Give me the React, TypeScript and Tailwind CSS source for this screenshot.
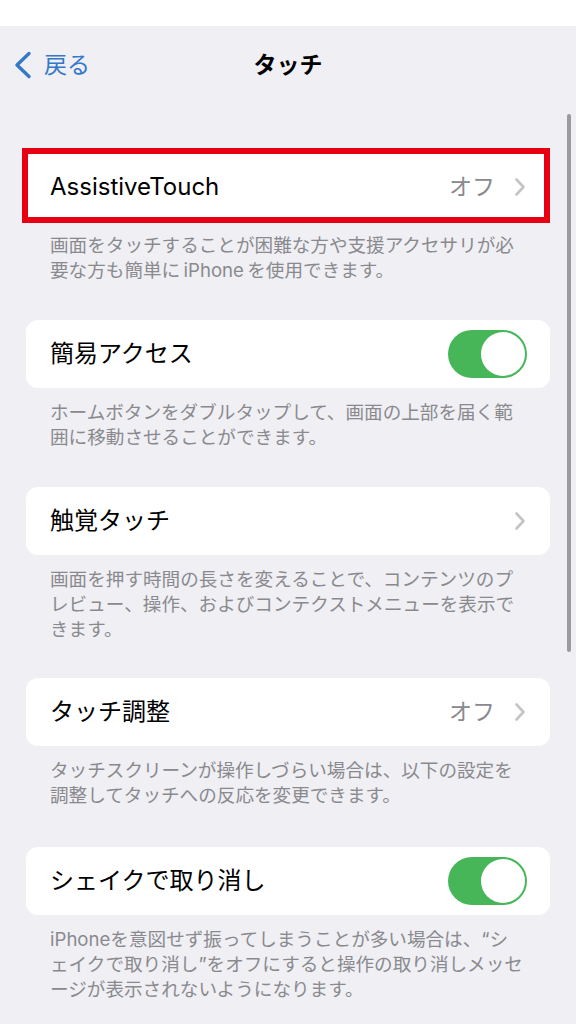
import React from "react";

const font = { fontFamily: 'Inter, "Noto Sans CJK JP", sans-serif' };

function Chevron() {
  return (
    <svg width="12" height="20" viewBox="0 0 12 20" className="shrink-0">
      <path d="M2.5 2.5 L9.5 10 L2.5 17.5" fill="none" stroke="#c4c4c8" strokeWidth="2.6" strokeLinecap="round" strokeLinejoin="round" />
    </svg>
  );
}

function Toggle() {
  return (
    <div className="relative w-[79px] h-[48px] rounded-full bg-[#46b658] shrink-0">
      <div className="absolute right-[2px] top-[2px] w-[44px] h-[44px] rounded-full bg-white" />
    </div>
  );
}

function Footer({ lines }: { lines: string[] }) {
  return (
    <div className="mt-[12px] px-[50px] text-[18.6px] leading-[25px] text-[#8a8a8e]">
      {lines.map((l, i) => (
        <div key={i} className="whitespace-nowrap">{l}</div>
      ))}
    </div>
  );
}

function Row({
  label,
  value,
  chevron,
  toggle,
}: {
  label: string;
  value?: string;
  chevron?: boolean;
  toggle?: boolean;
}) {
  return (
    <div
      className={`mx-[26px] h-[68px] rounded-[12px] bg-white flex items-center pl-[24px] ${toggle ? "pr-[23px]" : "pr-[24px]"}`}
    >
      <div className="flex-1 text-[24px] text-black whitespace-nowrap">{label}</div>
      {value && <div className="text-[23px] text-[#8a8a8e] mr-[19px]">{value}</div>}
      {chevron && <Chevron />}
      {toggle && <Toggle />}
    </div>
  );
}

export default function App() {
  return (
    <div className="relative w-[576px] h-[1024px] bg-[#efeff4] overflow-hidden" style={font} lang="ja">
      <div className="h-[26px] bg-white" />
      <div className="h-[78px] grid grid-cols-[1fr_auto_1fr] items-center">
        <div className="flex items-center pl-[14px]">
          <svg width="18" height="28" viewBox="0 0 18 28">
            <path d="M15 2.5 L3 14 L15 25.5" fill="none" stroke="#3478c8" strokeWidth="3.4" strokeLinecap="round" strokeLinejoin="round" />
          </svg>
          <span className="ml-[12px] text-[23px] text-[#3478c8]">戻る</span>
        </div>
        <div className="text-[23px] font-bold text-black">タッチ</div>
        <div />
      </div>

      <div className="mt-[49px]">
        <div className="relative">
          <Row label="AssistiveTouch" value="オフ" chevron />
          <div className="absolute left-[22px] right-[26px] top-[-5px] bottom-[-2px] border-[6px] border-[#e60012] pointer-events-none" />
        </div>
        <Footer
          lines={[
            "画面をタッチすることが困難な方や支援アクセサリが必",
            "要な方も簡単に\u2009iPhone\u2009を使用できます。",
          ]}
        />

        <div className="mt-[37px]">
          <Row label="簡易アクセス" toggle />
          <Footer
            lines={[
              "ホームボタンをダブルタップして、画面の上部を届く範",
              "囲に移動させることができます。",
            ]}
          />
        </div>

        <div className="mt-[37px]">
          <Row label="触覚タッチ" chevron />
          <Footer
            lines={[
              "画面を押す時間の長さを変えることで、コンテンツのプ",
              "レビュー、操作、およびコンテクストメニューを表示で",
              "きます。",
            ]}
          />
        </div>

        <div className="mt-[36px]">
          <Row label="タッチ調整" value="オフ" chevron />
          <Footer
            lines={[
              "タッチスクリーンが操作しづらい場合は、以下の設定を",
              "調整してタッチへの反応を変更できます。",
            ]}
          />
        </div>

        <div className="mt-[39px]">
          <Row label="シェイクで取り消し" toggle />
          <Footer
            lines={[
              "iPhoneを意図せず振ってしまうことが多い場合は、“シ",
              "ェイクで取り消し”をオフにすると操作の取り消しメッセ",
              "ージが表示されないようになります。",
            ]}
          />
        </div>
      </div>

      <div className="absolute left-[567px] top-[114px] w-[4px] h-[538px] rounded-full bg-[#9a9a9f]" />
    </div>
  );
}
